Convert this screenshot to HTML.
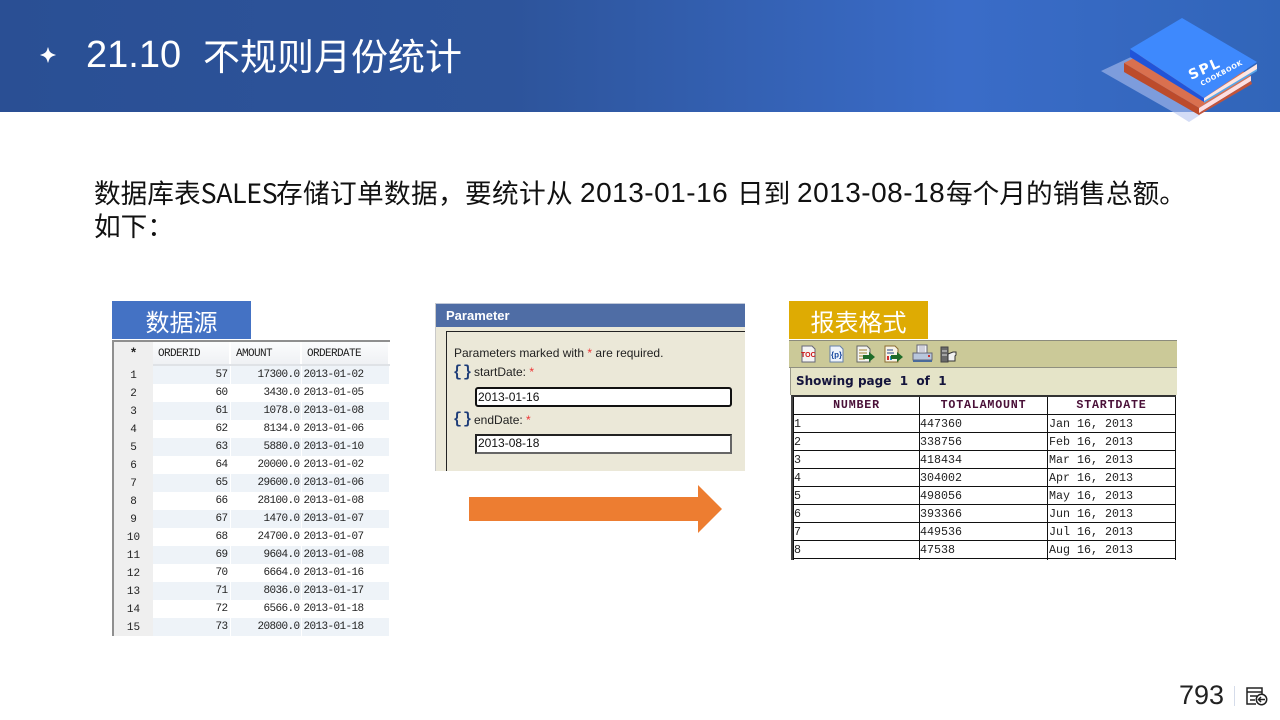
<!DOCTYPE html>
<html lang="zh"><head><meta charset="utf-8"><title>21.10 不规则月份统计</title>
<style>
*{box-sizing:border-box}
html,body{margin:0;padding:0;background:#fff}
body{width:1280px;height:720px;overflow:hidden;position:relative;font-family:"Liberation Sans","Noto Sans CJK SC",sans-serif}
.a{position:absolute;white-space:nowrap}
#hd{left:0;top:0;width:1280px;height:112px;background:linear-gradient(90deg,#2a4f94 0%,#2d549b 40%,#3a6cc8 75%,#3165b9 100%)}
.cjk{font-family:"Noto Sans CJK SC","Liberation Sans",sans-serif}
.title{color:#fff;font-size:37.33px;line-height:50px;top:29px;font-weight:400}
.body{color:#111;font-size:26.67px;line-height:34px;font-weight:400}
.d{font-family:"Liberation Sans",sans-serif;font-size:28px;letter-spacing:.5px}
.tag{color:#fff;font-size:24px;text-align:center;line-height:39px;height:38px;width:139px;top:301px;font-weight:400}
#dt{left:112px;top:340px;width:278px;height:296px;background:#fff;border-top:2px solid #8f8f8f;border-left:2px solid #8f8f8f;overflow:hidden}
#dt table{border-collapse:collapse;table-layout:fixed;width:276px;font:11px/18px "Liberation Mono",monospace;letter-spacing:-.6px;color:#222}
#dt td{height:18px;padding:0;white-space:nowrap;overflow:hidden}
#dt .g{width:39px;background:#efefef;text-align:center;padding-top:2px;line-height:16px;letter-spacing:0}
#dt .c1{width:77px;text-align:right;padding-right:2px;border-right:1px solid #fff}
#dt .c2{width:71px;text-align:right;padding-right:1px;border-right:1px solid #fff}
#dt .c3{text-align:left;padding-left:2px}
#dt tr:nth-child(even) td:not(.g){background:#eef3f8}
#dt .h td{height:23px;padding:2px 0 0 5px;text-align:left;background:linear-gradient(#fbfcfd,#eff1f4);border-right:2px solid #fff;border-bottom:2px solid #dfe2e6}
#dt .h td.g{background:#efefef;border:0;text-align:center;padding:0;font-size:13px;font-weight:bold}
#pm{left:435px;top:303px;width:310px;height:168px;background:#ebe8d8;border-left:1px solid #c9c9c9;overflow:hidden}
#pm .hb{position:absolute;left:0;top:0;width:310px;height:24px;background:#4f6da5;border-top:1px solid #c0c8d8;color:#fff;font:bold 13px/23px "Liberation Sans",sans-serif;padding-left:10px}
#pm .box{position:absolute;left:10px;top:28px;width:320px;height:160px;border:1px solid #222}
.pt{position:absolute;font:12px/14px "Liberation Sans",sans-serif;color:#222;white-space:nowrap}
.pt i{font-style:normal;color:#e33}
.br{position:absolute;font:bold 15px/16px "Liberation Mono",monospace;color:#1d3c78;letter-spacing:-.5px;transform:scaleY(1.05)}
.ip{position:absolute;left:39px;width:257px;height:20px;background:#fff;font:12px/16px "Liberation Sans",sans-serif;color:#111;padding-left:1px}
#rp{left:789px;top:339px;width:388px;height:221px}
#tb{position:absolute;left:0;top:1px;width:388px;height:28px;background:#cbc998;border-top:1px solid #8b8b7c;border-bottom:1px solid #8f8f7f}
#sb{position:absolute;left:1px;top:29px;width:387px;height:27px;background:#e5e4c8;border-left:1px solid #9a9a8a;font:bold 12px/26px "DejaVu Sans",sans-serif;color:#14143c;padding-left:5px}
#rt{position:absolute;left:2px;top:56px;width:385px;border-top:2px solid #333;border-left:2px solid #444;height:165px;overflow:hidden}
#rt table{border-collapse:collapse;table-layout:fixed;width:383px;font:11.67px/16px "Liberation Mono",monospace;color:#222;border-left:1px solid #111}
#rt td{height:18px;padding:1px 0 0;border-right:1px solid #111;border-bottom:1px solid #111;white-space:nowrap}
#rt td:nth-child(3){padding-left:1px}
#rt th{height:17px;padding:0;border-right:1px solid #111;border-bottom:1px solid #111;font:bold 11.67px/16px "Liberation Mono",monospace;letter-spacing:.8px;color:#4a1038;text-align:center}
</style></head><body>
<div class="a" id="hd"></div>
<svg class="a" style="left:39px;top:46px" width="18" height="18" viewBox="0 0 18 18"><path d="M9 1.500C9.800 6 11.500 7.800 16.500 9C11.500 10.200 9.800 12 9 16.500C8.200 12 6.500 10.200 1.500 9C6.500 7.800 8.200 6 9 1.500Z" fill="#fff" stroke="#fff" stroke-width=".6"/></svg>
<div class="a title" style="left:86px;top:30px;font-size:38px">21.10</div>
<div class="a title cjk" style="left:203px;font-size:37px">不规则月份统计</div>

<svg class="a" style="left:1095px;top:10px" width="175" height="120" viewBox="1095 10 175 120">
<polygon points="1101,71 1131,57 1200,112 1173,112" fill="#7d9cdc"/>
<polygon points="1173,112 1200,112 1200,115 1189,122" fill="#d3dcf6"/>
<polygon points="1124,63 1180,35 1251,76 1199,108" fill="#d9704f"/>
<polygon points="1124,63 1199,108 1199,115 1124,72" fill="#bc4b2b"/>
<polygon points="1199,108 1251,76 1251,81 1199,113" fill="#ffdfe0"/>
<polygon points="1199,113 1251,81 1252,84 1199,115" fill="#c3543a"/>
<polygon points="1204,100 1257,68 1257,71 1204,103" fill="#59a6e8"/>
<polygon points="1204,98 1257,64 1257,69 1204,101" fill="#fde6e3"/>
<polygon points="1130,49 1204,98 1204,102 1130,57" fill="#2154d8"/>
<polygon points="1182,18 1257,62 1204,98 1130,49" fill="#3e89fd"/>
<text x="0" y="0" transform="translate(1191,80) rotate(-24)" fill="#fff" font-family="'DejaVu Sans',sans-serif" font-weight="bold" font-size="14" letter-spacing="1.500">SPL</text>
<text x="0" y="0" transform="translate(1202,86) rotate(-28)" fill="#fff" font-family="'DejaVu Sans',sans-serif" font-weight="bold" font-size="6.600" letter-spacing=".5">COOKBOOK</text>
</svg>

<div class="a body cjk" style="left:94px;top:175px">数据库表<span style="letter-spacing:-.3px">SALES</span></div>
<div class="a body cjk" style="left:276px;top:175px;letter-spacing:.35px">存储订单数据，要统计从</div>
<div class="a body d" style="left:580px;top:176px">2013-01-16</div>
<div class="a body cjk" style="left:737px;top:175px">日到</div>
<div class="a body d" style="left:797px;top:176px">2013-08-18</div>
<div class="a body cjk" style="left:946px;top:175px">每个月的销售总额。</div>
<div class="a body cjk" style="left:94px;top:208px">如下：</div>

<div class="a tag cjk" style="left:112px;background:#4472c4">数据源</div>
<div class="a tag cjk" style="left:789px;background:#deab03">报表格式</div>

<div class="a" id="dt"><table>
<tr class="h"><td class="g">*</td><td style="width:77px">ORDERID</td><td style="width:71px">AMOUNT</td><td>ORDERDATE</td></tr>
<tr><td class="g">1</td><td class="c1">57</td><td class="c2">17300.0</td><td class="c3">2013-01-02</td></tr>
<tr><td class="g">2</td><td class="c1">60</td><td class="c2">3430.0</td><td class="c3">2013-01-05</td></tr>
<tr><td class="g">3</td><td class="c1">61</td><td class="c2">1078.0</td><td class="c3">2013-01-08</td></tr>
<tr><td class="g">4</td><td class="c1">62</td><td class="c2">8134.0</td><td class="c3">2013-01-06</td></tr>
<tr><td class="g">5</td><td class="c1">63</td><td class="c2">5880.0</td><td class="c3">2013-01-10</td></tr>
<tr><td class="g">6</td><td class="c1">64</td><td class="c2">20000.0</td><td class="c3">2013-01-02</td></tr>
<tr><td class="g">7</td><td class="c1">65</td><td class="c2">29600.0</td><td class="c3">2013-01-06</td></tr>
<tr><td class="g">8</td><td class="c1">66</td><td class="c2">28100.0</td><td class="c3">2013-01-08</td></tr>
<tr><td class="g">9</td><td class="c1">67</td><td class="c2">1470.0</td><td class="c3">2013-01-07</td></tr>
<tr><td class="g">10</td><td class="c1">68</td><td class="c2">24700.0</td><td class="c3">2013-01-07</td></tr>
<tr><td class="g">11</td><td class="c1">69</td><td class="c2">9604.0</td><td class="c3">2013-01-08</td></tr>
<tr><td class="g">12</td><td class="c1">70</td><td class="c2">6664.0</td><td class="c3">2013-01-16</td></tr>
<tr><td class="g">13</td><td class="c1">71</td><td class="c2">8036.0</td><td class="c3">2013-01-17</td></tr>
<tr><td class="g">14</td><td class="c1">72</td><td class="c2">6566.0</td><td class="c3">2013-01-18</td></tr>
<tr><td class="g">15</td><td class="c1">73</td><td class="c2">20800.0</td><td class="c3">2013-01-18</td></tr>
</table></div>

<div class="a" id="pm">
<div class="hb">Parameter</div>
<div class="box"></div>
<div class="pt" style="left:18px;top:43px">Parameters marked with <i>*</i> are required.</div>
<div class="br" style="left:17px;top:62px;letter-spacing:1px">{}</div>
<div class="pt" style="left:38px;top:62px">startDate: <i>*</i></div>
<div class="ip" style="top:84px;border:2px solid #111;border-radius:3px">2013-01-16</div>
<div class="br" style="left:17px;top:109px;letter-spacing:1px">{}</div>
<div class="pt" style="left:38px;top:110px">endDate: <i>*</i></div>
<div class="ip" style="top:131px;border:2px solid;border-color:#222 #666 #666 #222;line-height:15px">2013-08-18</div>
</div>

<svg class="a" style="left:469px;top:485px" width="254" height="48" viewBox="0 0 254 48"><polygon points="0,12 229,12 229,0 253,24 229,48 229,36 0,36" fill="#ed7d31"/></svg>

<div class="a" id="rp">
<div id="tb"><svg width="170" height="26" viewBox="0 0 170 26" style="position:absolute;left:0;top:0">
<path d="M13 5h10l3 3v13H13z" fill="#f4f4f4" stroke="#667" stroke-width="1"/><text x="12" y="16" font-family="'Liberation Sans',sans-serif" font-weight="bold" font-size="7" fill="#d01818">TOC</text>
<path d="M41 5h10l3 3v13H41z" fill="#eef3fb" stroke="#6680a8" stroke-width="1"/><text x="42" y="16.500" font-family="'Liberation Sans',sans-serif" font-weight="bold" font-size="8" fill="#1a4aa0">{p}</text>
<path d="M68 5h10l3 3v13H68z" fill="#f4f4f0" stroke="#666" stroke-width="1"/><path d="M70 9h8M70 12h8M70 15h6M70 18h6" stroke="#a08030" stroke-width="1"/><path d="M74 14h6v-3l6 5-6 5v-3h-6z" fill="#1f6b2a"/>
<path d="M96 5h10l3 3v13H96z" fill="#f8f4e8" stroke="#8a6a30" stroke-width="1"/><path d="M98 9h6M98 12h7" stroke="#224488" stroke-width="1"/><rect x="98" y="15" width="2" height="4" fill="#d03030"/><rect x="101" y="15" width="2" height="4" fill="#2090c0"/><path d="M102 14h6v-3l6 5-6 5v-3h-6z" fill="#1f6b2a"/>
<path d="M128 4h10v8h-10z" fill="#f0f2f6" stroke="#667" stroke-width="1"/><path d="M130 6h6M130 8h6M130 10h6" stroke="#99a" stroke-width=".8"/><path d="M124 12h19v7h-19z" fill="#b8c6dc" stroke="#667" stroke-width="1"/><rect x="124" y="19" width="19" height="2" fill="#4a6a9a"/><rect x="139" y="14" width="2" height="2" fill="#c33"/>
<path d="M152 6h7v15h-7z" fill="#6a6a6a" stroke="#444" stroke-width="1"/><path d="M153 10h5M153 14h5" stroke="#ddd" stroke-width="1"/><path d="M159 13l5-2h3v3l-1 1v5h-7z" fill="#f2f2f2" stroke="#333" stroke-width="1"/>
</svg></div>
<div id="sb">Showing page&nbsp; 1&nbsp; of&nbsp; 1</div>
<div id="rt"><table>
<tr><th style="width:126px">NUMBER</th><th style="width:128px">TOTALAMOUNT</th><th>STARTDATE</th></tr>
<tr><td>1</td><td>447360</td><td>Jan 16, 2013</td></tr>
<tr><td>2</td><td>338756</td><td>Feb 16, 2013</td></tr>
<tr><td>3</td><td>418434</td><td>Mar 16, 2013</td></tr>
<tr><td>4</td><td>304002</td><td>Apr 16, 2013</td></tr>
<tr><td>5</td><td>498056</td><td>May 16, 2013</td></tr>
<tr><td>6</td><td>393366</td><td>Jun 16, 2013</td></tr>
<tr><td>7</td><td>449536</td><td>Jul 16, 2013</td></tr>
<tr><td>8</td><td>47538</td><td>Aug 16, 2013</td></tr>
<tr><td>&nbsp;</td><td></td><td></td></tr>
</table></div>
</div>

<div class="a" style="left:1179px;top:680px;font:27px/30px 'Liberation Sans',sans-serif;color:#222">793</div>
<div class="a" style="left:1234px;top:686px;width:1px;height:20px;background:#d5dcea"></div>
<svg class="a" style="left:1246px;top:686px" width="22" height="20" viewBox="0 0 22 20" fill="none" stroke="#222" stroke-width="1.500"><path d="M10 18H1V2H16V8"/><path d="M1 6H16M4 10H11M4 14H9"/><circle cx="15.500" cy="13.500" r="5.200"/><path d="M19 13.500H12.500M15 11L12.500 13.500L15 16"/></svg>
</body></html>
